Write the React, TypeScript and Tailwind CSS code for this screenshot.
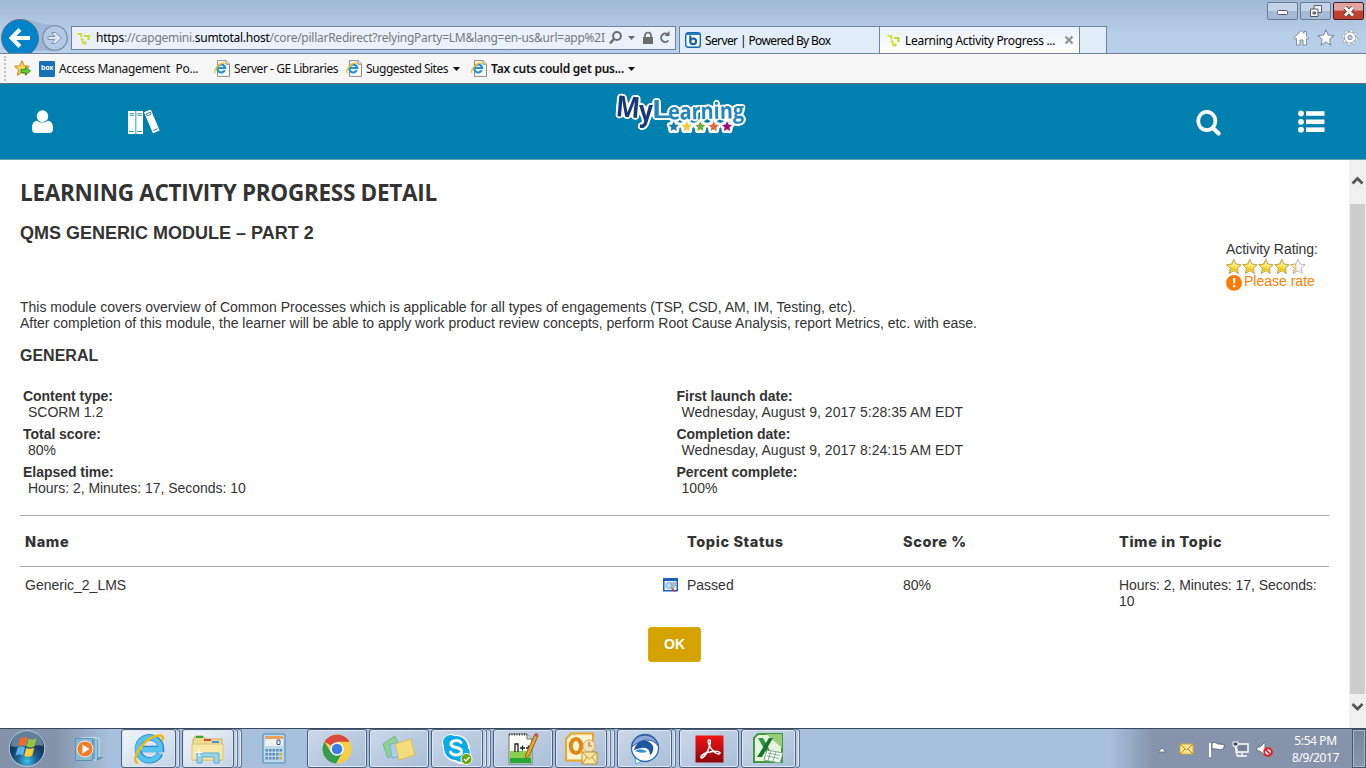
import React from "react";

const STAR = "M8 .8l2.2 4.9 5.2.6-3.9 3.6 1.1 5.3L8 12.5l-4.6 2.7 1.1-5.3L.6 6.3l5.2-.6z";

function GreenMark() {
  return (
    <svg width="14" height="13" viewBox="0 0 14 13" className="shrink-0" fill="none" strokeWidth="2.2">
      <path d="M.5 2h3.800v3.500" stroke="#d8de45" />
      <path d="M7 4h4.500v4" stroke="#c6d92f" />
      <path d="M3.500 7.500h2.300v4.200M5.800 11.500h2.700v-2.500" stroke="#d3dc3e" strokeWidth="1.800" />
    </svg>
  );
}

function PageIcon() {
  return (
    <svg width="17" height="17" viewBox="0 0 17 17" className="shrink-0">
      <path d="M3.5.6h8.6l3.4 3.4v12.4h-12z" fill="#fbfbfb" stroke="#8b8b8b" />
      <path d="M12 .6v3.6h3.5" fill="#eee" stroke="#8b8b8b" />
      <path d="M10.8 10.3a4 4 0 1 1 .4-2.3H3.7" fill="none" stroke="#2590d8" strokeWidth="2.2" />
      <path d="M1.2 13C-1 10.500 6 1.500 10.800 3.300" fill="none" stroke="#f3c41b" strokeWidth="1.4" />
    </svg>
  );
}

function Caret() {
  return (
    <svg width="7" height="4" viewBox="0 0 7 4" className="shrink-0">
      <path d="M0 0h7L3.500 4z" fill="#111" />
    </svg>
  );
}

function Toolbar() {
  return (
    <div className="flex h-[54px] border-b border-[#70839d] bg-linear-to-b from-[#9fb8d3] via-[#b7cee9] via-60% to-[#b9d0ea]">
      <svg width="71" height="53" viewBox="0 0 71 53" className="shrink-0">
        <path d="M20 19c14 0 18 6 35 6v26H20z" fill="#8da5c2" opacity=".55" />
        <circle cx="20" cy="38" r="18.500" fill="#0083c9" stroke="#5b7088" />
        <path d="M30 38H13M20 29.500L11.500 38l8.500 8.500" fill="none" stroke="#fff" strokeWidth="4" />
        <circle cx="55" cy="38" r="12.300" fill="#b4cae4" stroke="#7c8fa8" strokeWidth="1.300" />
        <path d="M48 36.500h7l-3.500-4h4l6 5.500-6 5.500h-4l3.500-4h-7z" fill="#dbe7f4" stroke="#8093ab" />
      </svg>
      <div className="mt-[26px] flex h-[24px] w-[605px] shrink-0 items-center border border-[#71839c] bg-[#eaf1fa] pl-[5px]">
        <GreenMark />
        <div className="ml-[5px] w-[510px] shrink-0 whitespace-nowrap text-[12px] leading-[20px] tracking-[-0.26px] text-[#757a80]">
          <span className="text-black">https</span>://capgemini.<span className="text-black">sumtotal.host</span>/core/pillarRedirect?relyingParty=LM&amp;lang=en-us&amp;url=app%2I
        </div>
        <svg width="66" height="18" viewBox="0 0 66 18" className="ml-[2px] shrink-0" fill="none" stroke="#6c6c6c">
          <circle cx="9" cy="7" r="3.900" strokeWidth="2" />
          <path d="M6 10l-4 4.500" strokeWidth="2.500" />
          <path d="M20 7h7l-3.500 4z" fill="#6c6c6c" stroke="none" />
          <path d="M35 8h10v7H35z" fill="#6c6c6c" stroke="none" />
          <path d="M37 9V6.500a3 3 0 0 1 6 0V9" strokeWidth="1.700" />
          <path d="M60 5.500a4.200 4.200 0 1 0 .5 6" strokeWidth="1.900" />
          <path d="M61.500 2v5h-5z" fill="#6c6c6c" stroke="none" />
        </svg>
      </div>
      <div className="mt-[26px] ml-[3px] flex h-[27px] shrink-0 text-[12px] text-black">
        <div className="flex w-[200px] items-center border-t border-l border-[#71839c] bg-[#e1edf9] pl-[5px]">
          <svg width="16" height="16" viewBox="0 0 16 16">
            <rect x=".7" y=".7" width="14.600" height="14.600" rx="2.500" fill="#f8fcff" stroke="#1765a9" strokeWidth="1.400" />
            <path d="M1 1h14v2H1z" fill="#1d7bbd" />
            <path d="M5.300 3.500v6" stroke="#155ca0" strokeWidth="2" />
            <circle cx="8.200" cy="9.300" r="2.900" fill="none" stroke="#155ca0" strokeWidth="2" />
          </svg>
          <span className="ml-[4px] whitespace-nowrap pt-[2px] tracking-[-0.62px]">Server | Powered By Box</span>
        </div>
        <div className="flex w-[200px] items-center border-t border-l border-[#71839c] bg-linear-to-b from-[#e9f1fa] to-white pl-[7px]">
          <GreenMark />
          <span className="ml-[4px] w-[151px] whitespace-nowrap pt-[2px] tracking-[-0.3px]">Learning Activity Progress ...</span>
          <svg width="10" height="10" viewBox="0 0 10 10" className="ml-[8px]">
            <path d="M1.500 1.500l7 7m0-7l-7 7" stroke="#949494" strokeWidth="2.300" />
          </svg>
        </div>
        <div className="w-[28px] border border-b-0 border-[#71839c] bg-[#e1edf9]" />
      </div>
      <div className="ml-auto flex flex-col items-end pr-[2px]">
        <div className="mt-[2px] flex gap-[2px]">
          <div className="flex h-[18px] w-[31px] items-center justify-center rounded-[2px] border border-[#687c96] bg-linear-to-b from-[#c4d4e6] from-50% to-[#a5bbd5] to-50%">
            <svg width="11" height="8" viewBox="0 0 11 8"><rect x=".5" y="3.500" width="10" height="4" rx="1" fill="#fff" stroke="#535a66" /></svg>
          </div>
          <div className="flex h-[18px] w-[31px] items-center justify-center rounded-[2px] border border-[#687c96] bg-linear-to-b from-[#c4d4e6] from-50% to-[#a5bbd5] to-50%">
            <svg width="12" height="12" viewBox="0 0 12 12" fill="#f5f7fa" stroke="#535a66"><path d="M4 .500h7.500v7H4z" /><path d="M.5 4h7.500v7.500H.5z" /><path d="M3 7h2.500v2H3z" fill="#8fa3bd" /></svg>
          </div>
          <div className="flex h-[18px] w-[31px] items-center justify-center rounded-[2px] border border-[#4d1a24] bg-linear-to-b from-[#dfa59e] from-45% to-[#c1412e] to-50%">
            <svg width="12" height="11" viewBox="0 0 12 11"><path d="M2 1.500l8 8m0-8l-8 8" stroke="#58414a" strokeWidth="4.600" /><path d="M2 1.500l8 8m0-8l-8 8" stroke="#fff" strokeWidth="2.800" /></svg>
          </div>
        </div>
        <svg width="68" height="18" viewBox="0 0 68 18" className="mt-[9px] mr-[3px]" fill="#fff" stroke="#8291a5" strokeWidth="1">
          <path d="M1 9l7-7.500 3 3V2.500h2.500V7L16 9l-1 1.300-1.500-.8v6.500h-3.500v-5H7v5H3.500V9.500L2 10.300z" />
          <g transform="translate(24.500 0) scale(1.050)"><path d={STAR} /></g>
          <circle cx="57" cy="8.500" r="6.600" strokeWidth="3" strokeDasharray="2.400 2.780" fill="none" />
          <circle cx="57" cy="8.500" r="5.700" />
          <circle cx="57" cy="8.500" r="6.600" stroke="#fff" strokeWidth="1.800" strokeDasharray="2.100 3.080" strokeDashoffset="-.15" fill="none" />
          <circle cx="57" cy="8.500" r="2.200" fill="#b9d0ea" />
        </svg>
      </div>
    </div>
  );
}

function Favorites() {
  return (
    <div className="flex h-[30px] items-center border-b border-[#686c70] bg-[#f6f6f6] text-[12px] text-[#111]">
      <div className="ml-[4px] h-[25px] w-0 border-l-2 border-dotted border-[#c2c2c2]" />
      <svg width="17" height="17" viewBox="0 0 17 17" className="ml-[8px] shrink-0">
        <path d={STAR} fill="#f8d35c" stroke="#c28a24" />
        <path d="M7 9.500h4.500V7l5 4-5 4v-2.500H7z" fill="#63ca3d" stroke="#27831d" strokeWidth=".8" />
      </svg>
      <div className="ml-[8px] flex h-4 w-4 shrink-0 items-center justify-center rounded-[1px] bg-[#1670b8] text-[7px] font-bold tracking-[-0.3px] text-white">box</div>
      <span className="ml-[4px] w-[144px] shrink-0 whitespace-pre tracking-[-0.31px]">Access Management  Po...</span>
      <div className="ml-[11px] flex"><PageIcon /></div>
      <span className="ml-[3px] w-[105px] shrink-0 whitespace-nowrap tracking-[-0.45px]">Server - GE Libraries</span>
      <div className="ml-[7px] flex"><PageIcon /></div>
      <span className="ml-[3px] w-[84px] shrink-0 whitespace-nowrap tracking-[-0.5px]">Suggested Sites</span>
      <span className="ml-[3px] flex"><Caret /></span>
      <div className="ml-[11px] flex"><PageIcon /></div>
      <span className="ml-[3px] w-[133px] shrink-0 whitespace-nowrap font-semibold tracking-[-0.24px]">Tax cuts could get pus...</span>
      <span className="ml-[4px] flex"><Caret /></span>
    </div>
  );
}

function Logo() {
  const stars: [number, string][] = [[60.700, "#187bab"], [73.700, "#f0c83d"], [87.300, "#69ad35"], [100.700, "#e0663c"], [114, "#a20b70"]];
  return (
    <svg width="136" height="44" viewBox="0 0 136 44" className="shrink-0 overflow-visible">
      <defs>
        <filter id="halo" x="-10%" y="-20%" width="120%" height="140%" colorInterpolationFilters="sRGB">
          <feGaussianBlur in="SourceAlpha" stdDeviation="1.700" result="soft" />
          <feComponentTransfer in="soft" result="edge"><feFuncR type="linear" slope="0" intercept="1" /><feFuncG type="linear" slope="0" intercept="1" /><feFuncB type="linear" slope="0" intercept="1" /><feFuncA type="linear" slope="14" intercept="-.55" /></feComponentTransfer>
          <feMerge><feMergeNode in="edge" /><feMergeNode in="SourceGraphic" /></feMerge>
        </filter>
      </defs>
      <g filter="url(#halo)" fontFamily="'Open Sans', sans-serif">
        <g fill="#19397d" fontWeight="700">
          <text x="3" y="25" fontSize="29" textLength="24" lengthAdjust="spacingAndGlyphs" transform="rotate(5 15 15)">M</text>
          <text x="26" y="29" fontSize="29" textLength="14" lengthAdjust="spacingAndGlyphs">y</text>
        </g>
        <g fill="#2286bd" fontWeight="700">
          <text x="38" y="25.500" fontSize="25" textLength="20" lengthAdjust="spacingAndGlyphs" fontWeight="600">L</text>
          <text x="55" y="27" fontSize="22.500" textLength="76" lengthAdjust="spacingAndGlyphs" transform="rotate(-1 90 20)">earning</text>
        </g>
        {stars.map(([x, c]) => (
          <g key={x} transform={`translate(${x - 5.400} 28.700) scale(.68)`}><path d={STAR} fill={c} stroke="#fff" strokeWidth="1.500" paintOrder="stroke" /></g>
        ))}
      </g>
    </svg>
  );
}

function SiteHeader() {
  return (
    <div className="flex h-[76px] border-b border-[#6f9fb5] bg-[#0080af] text-white">
      <svg width="22" height="24" viewBox="0 0 22 24" className="mt-[26px] ml-[32px] shrink-0" fill="currentColor">
        <ellipse cx="10.500" cy="6.300" rx="5.700" ry="6.100" />
        <path d="M0 18c0-4 1.500-6.800 5-7.300 3 2.500 8 2.500 11 0 3.500.5 5 3.300 5 7.300v1.500c0 2-1.500 3.500-3.500 3.500h-14C1.500 23 0 21.500 0 19.500z" />
      </svg>
      <svg width="34" height="25" viewBox="0 0 34 25" className="mt-[26px] ml-[73px] shrink-0">
        <path d="M1 1h7.300v23H1zM9.200 1H16v23H9.200z" fill="#fff" />
        <path d="M8.700 1v23" stroke="#55cfe8" />
        <path d="M2.500 3.700h4.500M2.500 5.300h4.500M10.300 3.700h4.500M10.300 5.300h4.500M2 21.500h5M10 21.500h5" stroke="#24799b" strokeWidth=".8" />
        <g transform="translate(2.300 0) rotate(-23 21 12)"><path d="M19 .500h7.300v23h-7.300z" fill="#fff" /><path d="M20.500 3h4.300v2h-4.300zM20.300 21h5" fill="none" stroke="#24799b" strokeWidth=".8" /></g>
      </svg>
      <div className="mt-[8px] ml-[452px] flex h-[44px]"><Logo /></div>
      <svg width="26" height="26" viewBox="0 0 26 26" className="mt-[26px] ml-[447px] shrink-0" fill="none" stroke="#fff">
        <ellipse cx="10.800" cy="11" rx="8.600" ry="9.200" strokeWidth="3.800" />
        <path d="M17 18l5.600 5.600" strokeWidth="4.200" strokeLinecap="round" />
      </svg>
      <svg width="28" height="24" viewBox="0 0 28 24" className="mt-[26px] ml-[76px] shrink-0" fill="#fff">
        {[3.500, 11.800, 19.700].map((y) => (
          <g key={y}><circle cx="3" cy={y} r="2.900" /><path d={`M8 ${y - 2.300}h18.500v4.600H8z`} /></g>
        ))}
      </svg>
    </div>
  );
}

function Field({ label, value }: { label: string; value: string }) {
  return (
    <div className="mb-[6px] text-[14px] leading-[16px]">
      <div className="font-bold tracking-[-0.03px]">{label}</div>
      <div className="pl-[5px]">{value}</div>
    </div>
  );
}

function Content() {
  return (
    <main className="w-[1349px] shrink-0 pt-[17px] pl-[20px] font-['Liberation_Sans',sans-serif] text-[14px] leading-[16px] text-[#333]">
      <h1 className="h-[30px] whitespace-nowrap font-['Open_Sans',sans-serif] text-[22.5px] leading-[31px] font-bold tracking-[-0.29px]">LEARNING ACTIVITY PROGRESS DETAIL</h1>
      <div className="mt-[16px] flex h-[76px] w-[1309px] justify-between">
        <h2 className="text-[18px] leading-[20px] font-bold">QMS GENERIC MODULE – PART 2</h2>
        <div className="mt-[18px] w-[103px] whitespace-nowrap">
          <div className="tracking-[-0.04px]">Activity Rating:</div>
          <svg width="80" height="17" viewBox="0 0 80 17" className="block">
            {[0, 1, 2, 3, 4].map((i) => (
              <g key={i} transform={`translate(${i * 16} 1.500) scale(.98)`}>
                <path d={STAR} fill={i < 4 ? "#fbe05a" : "#f3f3f3"} stroke={i < 4 ? "#a58c35" : "#aaa"} strokeWidth=".8" />
                {i === 4 && <path d="M5.800 5.700L.6 6.300l3.900 3.600-1.100 5.300L6 13.700z" fill="#f9ef9e" stroke="#aaa167" strokeWidth=".6" />}
                <path d="M8 3l1.500 4H13" fill="none" stroke="#fff" strokeWidth=".8" opacity=".7" />
                {i < 4 && <path d="M5 9l6 2 .5 2.500L8 11.600l-3 1.500z" fill="#f3c90f" />}
              </g>
            ))}
          </svg>
          <div className="-mt-px flex text-[#ff7f00]">
            <svg width="17" height="18" viewBox="0 0 17 18" className="mr-px shrink-0">
              <circle cx="8" cy="9.800" r="7.900" fill="#ff7900" />
              <path d="M6.800 5h2.700l-.5 5.500H7.300zM7 12h2.300v2.300H7z" fill="#fff" />
            </svg>
            <span>Please rate</span>
          </div>
        </div>
      </div>
      <p className="whitespace-nowrap">This module covers overview of Common Processes which is applicable for all types of engagements (TSP, CSD, AM, IM, Testing, etc).</p>
      <p className="whitespace-nowrap tracking-[-0.027px]">After completion of this module, the learner will be able to apply work product review concepts, perform Root Cause Analysis, report Metrics, etc. with ease.</p>
      <h3 className="mt-[15px] text-[16px] leading-[20px] font-bold">GENERAL</h3>
      <div className="mt-[22px] ml-[3px] grid h-[127px] grid-cols-[653.5px_1fr]">
        <div className="tracking-[-0.03px]">
          <Field label="Content type:" value="SCORM 1.2" />
          <Field label="Total score:" value="80%" />
          <Field label="Elapsed time:" value="Hours: 2, Minutes: 17, Seconds: 10" />
        </div>
        <div className="tracking-[0.03px]">
          <Field label="First launch date:" value="Wednesday, August 9, 2017 5:28:35 AM EDT" />
          <Field label="Completion date:" value="Wednesday, August 9, 2017 8:24:15 AM EDT" />
          <Field label="Percent complete:" value="100%" />
        </div>
      </div>
      <div className="grid h-[52px] w-[1309px] grid-cols-[662px_216px_216px_1fr] items-center border-y border-[#a9a9a9] pt-[2px] pl-[5px] font-['Inter',sans-serif] text-[14.5px] font-extrabold tracking-[0.6px] whitespace-nowrap">
        <div>Name</div><div>Topic Status</div><div>Score %</div><div>Time in Topic</div>
      </div>
      <div className="grid h-[60px] w-[1309px] grid-cols-[638px_24px_216px_216px_205px] pt-[10px] pl-[5px]">
        <div>Generic_2_LMS</div>
        <svg width="16" height="15" viewBox="0 0 16 15" className="mt-px">
          <rect x=".75" y=".75" width="13.500" height="12" fill="#eef6ff" stroke="#1460ba" strokeWidth="1.500" />
          <path d="M0 0h15v3H0z" fill="#1460ba" />
          <path d="M8 5h5M9 7h4M9 9h3" stroke="#6c7b92" />
          <circle cx="5.800" cy="7.500" r="3" fill="#bddcf4" stroke="#7ba7d0" />
          <path d="M8.500 10l3.500 3.500" stroke="#cf3c34" strokeWidth="1.700" />
        </svg>
        <div>Passed</div><div>80%</div><div className="tracking-[-0.05px]">Hours: 2, Minutes: 17, Seconds: 10</div>
      </div>
      <button className="ml-[628px] block h-[35px] w-[53px] rounded-[3px] border border-[#dda80a] bg-[#d5a300] pb-[2px] text-[14px] font-bold text-white">OK</button>
    </main>
  );
}

function Scrollbar() {
  return (
    <div className="flex w-[17px] flex-col items-center bg-[#f0f0f0]">
      <svg width="17" height="44" viewBox="0 0 17 44" className="shrink-0"><path d="M3.500 23.500l5-5 5 5" fill="none" stroke="#555" strokeWidth="2.800" /></svg>
      <div className="h-[490px] w-[15px] shrink-0 bg-[#cdcdcd]" />
      <svg width="17" height="34" viewBox="0 0 17 34" className="shrink-0"><path d="M3.500 10l5 5 5-5" fill="none" stroke="#555" strokeWidth="2.800" /></svg>
    </div>
  );
}

function TaskButton({ children, box, stack = 0, bright = false }: { children: React.ReactNode; box: string; stack?: number; bright?: boolean }) {
  const tone = bright ? "from-[#f0f5fa] to-[#c5d3e5]" : "from-[#cbd8e8] to-[#a9bed8]";
  return (
    <div className="flex h-[39px] shrink-0">
      <div className={`${box} ${tone} flex items-center justify-center rounded-[3px] border border-[#4c5f79] bg-linear-to-br shadow-[inset_0_0_0_1px_#dce7f3]`}>{children}</div>
      {Array.from({ length: stack }, (_, i) => (
        <div key={i} className="w-[4px] rounded-r-[3px] border border-l-0 border-[#5f7591] bg-[#bfd0e4] shadow-[inset_-1px_0_0_#dce7f3]" />
      ))}
    </div>
  );
}

function Taskbar() {
  return (
    <div className="flex h-[40px] border-t border-[#39485b] bg-linear-to-r from-[#8493aa] from-4% via-[#a7c0dd] via-8% to-[#a7c0dd] text-white">
      <svg width="38" height="38" viewBox="0 0 38 38" className="ml-[8px] shrink-0">
        <defs><radialGradient id="orb" cy=".85"><stop offset="0" stopColor="#39c5ea" /><stop offset=".55" stopColor="#215e8c" /><stop offset="1" stopColor="#173b60" /></radialGradient></defs>
        <circle cx="19" cy="19.500" r="17.800" fill="url(#orb)" stroke="#b4d2e5" />
        <path d="M3 17a16 15 0 0 1 32 0c-7-3-22 3-32 0z" fill="#b8cbdc" opacity=".48" />
        <path d="M12 9.500c3-2 5-1.800 7.500-.4l-2 8c-2.500-1.500-5-1.500-7.500.2z" fill="#f06a28" />
        <path d="M20.500 9.800c3 1.200 5 1.200 8-.6l-2 8c-3 1.800-5 1.500-7.800.4z" fill="#91c63d" />
        <path d="M9.500 18.700c2.500-1.700 5-1.700 7.500-.2l-2 8c-2.500-1.500-5-1.500-7.600.3z" fill="#57b4e9" />
        <path d="M18.200 19c3 1.200 5 1.200 8-.6l-2 8c-3 1.700-5.500 1.600-8 .5z" fill="#fdcf35" />
      </svg>
      <svg width="30" height="28" viewBox="0 0 30 28" className="mt-[6px] ml-[29px] shrink-0">
        <path d="M7 3h17v21H7z" fill="#6ea8c8" stroke="#d0e6ef" /><path d="M4 3h17v22H4z" fill="#6ea8c8" stroke="#c6dfeb" />
        <path d="M.5 3.500h17v22H.5z" fill="#8bb7cf" stroke="#5c93b4" /><path d="M23 22h6l-5 3h-3z" fill="#6f93b2" />
        <circle cx="10" cy="14" r="8" fill="#f47b27" stroke="#e9eef0" /><path d="M7.500 9.500v9l7-4.500z" fill="#fff" />
      </svg>
      <div className="ml-[16px]"><TaskButton box="w-[55px]" stack={1} bright>
        <svg width="32" height="32" viewBox="0 0 32 32">
          <path d="M27 20.500A11.500 11.500 0 1 1 28 16H9" fill="none" stroke="#2583c8" strokeWidth="6.500" />
          <path d="M26.500 20.500A11.500 11.500 0 1 1 27.500 16.500H9" fill="none" stroke="#54c4ee" strokeWidth="4.800" />
          <path d="M5 30C-5 28 15-2 29 3c1 1 1 3 0 5" fill="none" stroke="#f3b818" strokeWidth="2.500" />
        </svg>
      </TaskButton></div>
      <div className="ml-[2px]"><TaskButton box="w-[52px]" stack={2} bright>
        <svg width="34" height="32" viewBox="0 0 34 32">
          <path d="M2 7l2-4h8l2 3h17v21H2z" fill="#f0db91" stroke="#cdae56" /><path d="M5 3h7v2H5z" fill="#2cac3c" /><path d="M13 6h7v2h-7z" fill="#d54b35" /><path d="M21 8h7v2h-7z" fill="#3795da" />
          <path d="M1 11h31v16H1z" fill="#f7e7a9" stroke="#dcc47a" />
          <path d="M6 30V20h22v10h-5v-6H11v6z" fill="#9bd3e8" stroke="#5aaac9" /><path d="M8 16v7M4.500 19.500h7" stroke="#fff" strokeWidth="1.200" />
        </svg>
      </TaskButton></div>
      <svg width="24" height="31" viewBox="0 0 24 31" className="mt-[4px] ml-[20px] shrink-0">
        <rect x="1" y="1" width="22" height="29" rx="2" fill="#b9d9ec" stroke="#6d9fc5" strokeWidth="1.500" />
        <path d="M3 3h18v3H3z" fill="#eaa15b" /><path d="M3 6h18v7H3z" fill="#eef1f4" /><path d="M15 7h3v4.500h-3z" fill="none" stroke="#425a76" />
        {[16, 20, 24].map((y) => [3.500, 7, 10.500, 14, 17.500].map((x) => <rect key={`${x}-${y}`} x={x} y={y} width="2.500" height="2.500" fill={x === 17.500 && y > 19 ? "#f0a52a" : "#638cb3"} />))}
      </svg>
      <div className="ml-[21px] flex gap-[2px]">
        <TaskButton box="w-[60px]">
          <svg width="30" height="30" viewBox="0 0 30 30">
            <circle cx="15" cy="15" r="14.500" fill="#f9cf45" /><path d="M15 15L2.500 7.700A14.500 14.500 0 0 1 27.600 7.700H15z" fill="#d94a3d" />
            <path d="M2.500 7.700A14.500 14.500 0 0 0 14 29.500l6.500-11L9 18.500z" fill="#369b51" /><circle cx="15" cy="15" r="6.800" fill="#fff" /><circle cx="15" cy="15" r="5.300" fill="#397fe5" />
          </svg>
        </TaskButton>
        <TaskButton box="w-[60px]">
          <svg width="34" height="28" viewBox="0 0 34 28">
            <path d="M1 9l12-8 6 14-13 8z" fill="#8fd296" stroke="#70b984" /><path d="M8 9l14-2 2 14-14 2z" fill="#a5d0f3" stroke="#76b1e0" /><path d="M13 9l16-5 4 16-16 5z" fill="#f5dc7b" stroke="#d8bc57" />
          </svg>
        </TaskButton>
        <TaskButton box="w-[52px]" stack={2}>
          <svg width="32" height="32" viewBox="0 0 32 32">
            <circle cx="10" cy="10" r="9" fill="#fff" /><circle cx="20" cy="21" r="10" fill="#fff" /><circle cx="15.500" cy="15.500" r="13.500" fill="#fff" />
            <circle cx="9.500" cy="9.500" r="7.500" fill="#0aaae8" /><circle cx="20" cy="20" r="8.800" fill="#0aaae8" /><circle cx="15" cy="15" r="12" fill="#0aaae8" />
            <path d="M20 9.500c-2-3-10-2.500-10 1.500 0 5 10.500 2 10.500 7.500 0 4-8.500 5-11 .5" fill="none" stroke="#fff" strokeWidth="3" strokeLinecap="round" />
            <circle cx="25.500" cy="26" r="5.500" fill="#65a80d" stroke="#fff" /><path d="M23 26l2 2 3.500-4" fill="none" stroke="#fff" strokeWidth="1.300" />
          </svg>
        </TaskButton>
        <TaskButton box="w-[60px]">
          <svg width="32" height="33" viewBox="0 0 32 33">
            <path d="M2 2h18l5 5v25H2z" fill="#fafff7" stroke="#66776b" /><path d="M3 19h21v12H3z" fill="#8bd04f" /><path d="M3 26h21v5H3z" fill="#25a733" /><path d="M20 2v5h5" fill="#ddd" stroke="#777" />
            <path d="M2 2.500h18" stroke="#333" strokeWidth="2" strokeDasharray="1 1.500" />
            <path d="M8 20v-8h3v8M13 16h5m-2.500-2.500v5M19 16h5m-2.500-2.500v5" fill="none" stroke="#222" strokeWidth="1.300" />
            <path d="M18 27l1-5L28 2l3 2-9 20z" fill="#e8a329" stroke="#8c6523" /><path d="M28 2l3 2" stroke="#c95252" strokeWidth="3" />
          </svg>
        </TaskButton>
        <TaskButton box="w-[52px]" stack={2}>
          <svg width="34" height="33" viewBox="0 0 34 33">
            <path d="M7 1.500h22v27H2V7z" fill="#fff3d2" stroke="#eba52b" strokeWidth="2" /><ellipse cx="12" cy="14" rx="5.200" ry="7" fill="none" stroke="#df8614" strokeWidth="4" />
            <circle cx="25" cy="14" r="6" fill="#f2e3be" stroke="#e8aa48" /><path d="M25 10v4h3" fill="none" stroke="#c76a24" strokeWidth="1.200" />
            <path d="M18 20h15v12H18z" fill="#ffe7a0" stroke="#bc9140" /><path d="M18 20l7.500 7 7.500-7M18 32l5-7m10 7l-5-7" fill="none" stroke="#bc9140" />
          </svg>
        </TaskButton>
        <TaskButton box="w-[55px]" stack={1}>
          <svg width="30" height="32" viewBox="0 0 30 32">
            <path d="M5 25l1 6 9-4z" fill="#fff" stroke="#3caede" /><circle cx="15" cy="15" r="13.500" fill="#fff" stroke="#256bad" strokeWidth="1.300" />
            <path d="M2 14C3-1 25-2 28 13c-4-7-15-9-26 1z" fill="#8fa8dc" stroke="#31539e" />
            <path d="M4 17C7 5 19 5 23 13c1 5-1 8-3 9 0-5-3-8-8-7-3 0-5 1-8 2z" fill="#1b589e" /><path d="M5 18c4-3 9-2 12 1-4 1-8 1-12-1z" fill="#3b8fd0" />
          </svg>
        </TaskButton>
        <div className="ml-px"><TaskButton box="w-[60px]">
          <svg width="29" height="28" viewBox="0 0 29 28">
            <defs><linearGradient id="pdf" x2="0" y2="1"><stop stopColor="#f31515" /><stop offset="1" stopColor="#8d0609" /></linearGradient></defs>
            <path d="M.5.500h28v27H.5z" fill="url(#pdf)" /><path d="M13.500 5c5-2-1 15-6.500 18-3 0 0-5 8-6 6-2 10 0 10 1-2 3-8-2-11-8-1-3-1-4-.5-5z" fill="none" stroke="#fff" strokeWidth="1.500" />
          </svg>
        </TaskButton></div>
        <TaskButton box="w-[55px]" stack={1}>
          <svg width="31" height="31" viewBox="0 0 31 31">
            <path d="M5 1h24v28H1V5z" fill="#e7f4df" stroke="#43973d" strokeWidth="2" /><path d="M13 1h16v14z" fill="#9acb7c" />
            <path d="M5 5h5l10 18h-5z" fill="#2d963e" /><path d="M20 5h-4L4 24h5z" fill="#197331" />
            <path d="M14 17l16 3-3 10-16-3z" fill="#fafffa" stroke="#79a77e" /><path d="M15 20l12 2.500M14 23l12 2.500M18 18l-3 9M23 19l-3 9" stroke="#69a274" strokeWidth=".8" />
          </svg>
        </TaskButton>
      </div>
      <div className="ml-auto flex h-[39px] w-[256px] shrink-0 bg-linear-to-r from-[#a7c0dd] to-[#8594ab] to-17% text-center">
        <svg width="175" height="39" viewBox="0 0 175 39" className="shrink-0" fill="none">
          <path d="M48 23h8l-4-4z" fill="#fff" stroke="#657790" />
          <path d="M70 15h13v10H70z" fill="#ffe58e" stroke="#d7a83b" /><path d="M70 15l6.500 6 6.500-6M70 25l5-5m8 5l-5-5" stroke="#af8836" />
          <path d="M100 14v14" stroke="#fff" strokeWidth="2" /><path d="M102 14c4-2 5 2 8 1l5 1-2 4c-4 2-6-1-11 0z" fill="#fff" stroke="#4e5964" strokeWidth=".8" />
          <path d="M126 15h12v8h-12z" fill="#768595" stroke="#fff" strokeWidth="1.500" /><path d="M132 24v3m-5 0h10M125 13v5l2 2v7" stroke="#fff" strokeWidth="1.400" /><path d="M123 13h5v4h-5z" fill="#414e5e" stroke="#fff" />
          <path d="M147 18h3l5-5v14l-5-5h-3z" fill="#fff" stroke="#657483" /><circle cx="158" cy="23" r="3.800" fill="#fff" stroke="#ed1b24" strokeWidth="2" /><path d="M155.500 20.500l5 5" stroke="#ed1b24" strokeWidth="1.700" />
        </svg>
        <div className="w-[61px] pt-[3px] text-[12px] leading-[17px] tracking-[-0.4px]"><div>5:54 PM</div><div>8/9/2017</div></div>
        <div className="ml-auto h-[39px] w-[14px] border border-[#46566c] bg-linear-to-b from-[#75859c] to-[#8998ad] shadow-[inset_0_0_0_1px_#aab8c9]" />
      </div>
    </div>
  );
}

export default function App() {
  return (
    <div className="flex h-[768px] w-[1366px] flex-col overflow-hidden bg-white font-['Noto_Sans',sans-serif]">
      <Toolbar />
      <Favorites />
      <SiteHeader />
      <div className="flex h-[568px] shrink-0"><Content /><Scrollbar /></div>
      <Taskbar />
    </div>
  );
}
